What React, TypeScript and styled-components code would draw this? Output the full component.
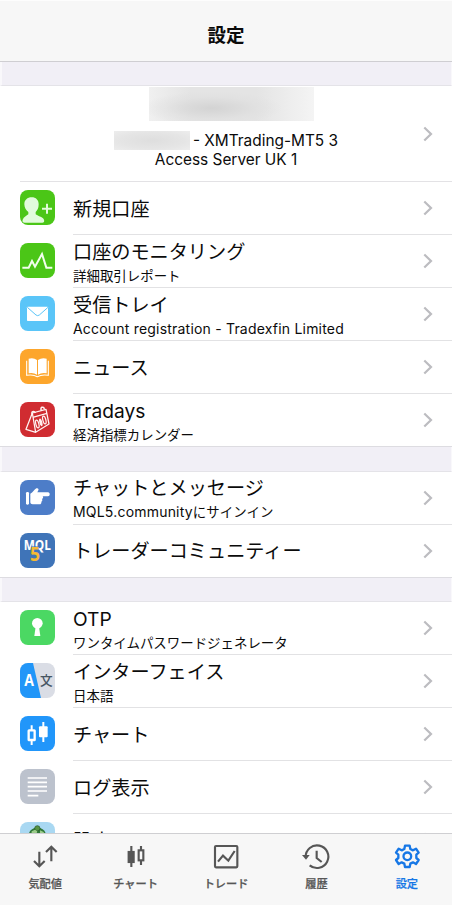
import React from "react";
import styled, { createGlobalStyle } from "styled-components";

const Global = createGlobalStyle`
  * { box-sizing: border-box; }
  html, body { margin: 0; padding: 0; background: #fff; }
  body { font-family: Inter, "Noto Sans CJK JP", sans-serif; color: #0b0b0b; overflow: hidden; }
`;

const Screen = styled.div`
  width: 452px;
  height: 905px;
  display: flex;
  flex-direction: column;
  overflow: hidden;
  background: #fff;
`;
const Header = styled.header`
  flex: none;
  height: 62px;
  padding-top: 8px;
  display: flex;
  align-items: center;
  justify-content: center;
  background: #f7f7f7;
  border-top: 1px solid #fdfdfd;
  border-bottom: 1px solid #cfced2;
`;
const HeaderTitle = styled.h1`
  margin: 0;
  font-size: 18.5px;
  line-height: 26px;
  font-weight: 700;
`;
const Content = styled.main`
  flex: 1;
  min-height: 0;
  overflow: hidden;
`;
const Gap = styled.div<{ $h: number }>`
  height: ${(p) => p.$h}px;
  background: #f1eff6;
  border-left: 2px solid #f9f8fb;
  border-right: 1px solid #f9f8fb;
  border-bottom: 1px solid #e4e3e8;
`;
const Account = styled.section`
  height: 96px;
  display: flex;
  align-items: center;
  padding-right: 19px;
  background: linear-gradient(#e3e2e5, #e3e2e5) 20px 100% / 432px 1px no-repeat;
`;
const AccountInfo = styled.div`
  flex: 1;
  height: 96px;
  padding: 1px 0 0 29px;
  display: flex;
  flex-direction: column;
  align-items: center;
`;
const NameMask = styled.div`
  width: 165px;
  height: 34px;
  margin: 0 0 10px 10px;
  background:
    radial-gradient(ellipse 70px 17px at 38% 62%, #d3d3d3, rgba(222, 222, 222, 0.5) 65%, transparent),
    linear-gradient(90deg, #f0f0f0, #e4e4e4 25%, #e4e4e4 65%, #f4f4f4);
`;
const ServerLine = styled.div`
  display: flex;
  align-items: center;
  height: 19px;
  font-size: 15.4px;
  line-height: 19px;
  white-space: pre;
`;
const NumberMask = styled.span`
  width: 76px;
  height: 19px;
  margin-right: 3px;
  background: radial-gradient(ellipse at center, #dedede, #e5e5e5 60%, #ededed);
`;
const Row = styled.div`
  height: 53px;
  display: flex;
  padding-left: 19.5px;
`;
const RowIcon = styled.svg`
  flex: none;
  width: 35px;
  height: 35px;
  margin: 8px 18.5px 0 0;
  border-radius: 8px;
`;
const RowBody = styled.div`
  flex: 1;
  display: flex;
  align-items: center;
  padding-right: 19px;
  border-bottom: 1px solid #e2e2e4;
`;
const SectionRow = styled(Row)`
  background: linear-gradient(#dddce1, #dddce1) 0 100% / 100% 1px no-repeat;
  ${RowBody} { border-bottom-color: transparent; }
`;
const Texts = styled.div`
  flex: 1;
  display: flex;
  flex-direction: column;
  padding-top: 1.5px;
`;
const Title = styled.div`
  font-size: 19.15px;
  line-height: 24px;
  white-space: nowrap;
`;
const Sub = styled.div`
  margin-top: 1px;
  font-size: 13.45px;
  line-height: 22px;
  white-space: nowrap;
`;
const Latin = styled.span`
  font-size: 14px;
  letter-spacing: 0.2px;
`;
const TwoLine = styled(Texts)`
  padding-top: 4px;
`;
const ChevronSvg = styled.svg`
  flex: none;
  width: 10px;
  height: 16px;
`;
const TabBar = styled.nav`
  flex: none;
  height: 72px;
  display: flex;
  background: #f7f7f7;
  border-top: 1px solid #cfcfd2;
`;
const Tab = styled.div<{ $active?: boolean }>`
  flex: 1;
  display: flex;
  flex-direction: column;
  align-items: center;
  padding-top: 8px;
  color: ${(p) => (p.$active ? "#1677e6" : "#565656")};
`;
const TabIcon = styled.svg`
  width: 30px;
  height: 30px;
  fill: none;
  stroke: currentColor;
  stroke-width: 6.4;
`;
const TabLabel = styled.span`
  margin-top: 4px;
  font-size: 11.2px;
  line-height: 16px;
  font-weight: 500;
  -webkit-text-stroke: 0.25px currentColor;
`;

const Chevron = () => (
  <ChevronSvg viewBox="0 0 10 16">
    <path d="M1.3 1.5 8 8l-6.7 6.5" fill="none" stroke="#bcbcc0" strokeWidth="2.2" />
  </ChevronSvg>
);

const icons: Record<string, React.ReactNode> = {
  account: (
    <>
      <rect width="105" height="105" fill="#4bc617" />
      <path d="M35 22c13 0 21 8 21 21 0 12-4 18-9 23v7c5 5 21 7 25 16 2 5-1 9-5 9H14c-5 0-8-4-6-9 3-9 12-11 17-16v-7c-7-5-12-13-12-23 0-13 9-21 22-21z" fill="#e2fbdc" />
      <path d="M66 56h30M81 41v30" stroke="#e2fbdc" strokeWidth="6" />
    </>
  ),
  monitor: (
    <>
      <rect width="105" height="105" fill="#4bc617" />
      <path d="M7 74h19l10-20 9 17 21-38 13 41h18" fill="none" stroke="#f1ffed" strokeWidth="6" />
    </>
  ),
  mail: (
    <>
      <rect width="105" height="105" fill="#5ac5f8" />
      <rect x="21" y="32" width="63" height="43" rx="2" fill="#fff" />
      <path d="m22 34 26 23q5 4 10 0l26-23" fill="none" stroke="#5ac5f8" strokeWidth="3" />
    </>
  ),
  news: (
    <>
      <rect width="105" height="105" fill="#fda62c" />
      <path d="M26 29q15-4 25 4v44q-11-7-25-4zM80 29q-15-4-26 4v44q11-7 26-4z" fill="#fff" />
      <path d="M20 35v44q20-3 32 4 13-7 33-4V35" fill="none" stroke="#fff" strokeWidth="3.2" />
    </>
  ),
  calendar: (
    <>
      <rect width="105" height="105" fill="#d02c31" />
      <g fill="none" stroke="#fff3f2" strokeWidth="3.8" strokeLinejoin="round">
        <path d="m37 33 41-11 9 44-40 25-29-9zM37 33l10 58M38 46l43-12" />
        <path d="M37 37c-5-7 5-12 9-4M64 25c-5-9 7-14 9-4" strokeWidth="4.5" />
        <ellipse cx="52" cy="66" rx="4.5" ry="12" transform="rotate(-14 52 66)" />
        <ellipse cx="73" cy="54" rx="4.5" ry="12" transform="rotate(-14 73 54)" />
        <ellipse cx="62.5" cy="61" rx="2.5" ry="10" fill="#fff3f2" transform="rotate(-14 62 61)" />
      </g>
    </>
  ),
  chat: (
    <>
      <rect width="105" height="105" fill="#4d7dc8" />
      <rect x="18" y="36" width="9" height="38" rx="4" fill="#fff" />
      <path d="M31 41c8-3 11-12 18-16 5-2 8 2 6 6l-3 6h32c7 0 7 12 0 12H68c3 3 1 7-2 8 2 3 1 7-2 8 1 4-1 8-6 8H38c-4 0-7-2-7-6z" fill="#fff" />
    </>
  ),
  mql: (
    <>
      <rect width="105" height="105" fill="#3f74b8" />
      <text x="11" y="52" fontFamily="Open Sans" fontWeight="700" fontSize="45" textLength="82" lengthAdjust="spacingAndGlyphs" fill="#fff">MQL</text>
      <text x="30" y="84" fontFamily="Open Sans" fontWeight="700" fontSize="61" textLength="30" lengthAdjust="spacingAndGlyphs" fill="#f5b933" stroke="#3f74b8" strokeWidth="3" paintOrder="stroke">5</text>
    </>
  ),
  otp: (
    <>
      <rect width="105" height="105" fill="#4bd863" />
      <circle cx="52" cy="40" r="16" fill="#fff" />
      <path d="M47 50h10l4 28H43z" fill="#fff" />
    </>
  ),
  language: (
    <>
      <rect width="105" height="105" fill="#dadde5" />
      <path d="M0 0h39l24 105H0z" fill="#2196f8" />
      <text x="13" y="70" fontFamily="Open Sans" fontWeight="700" fontSize="48" textLength="29" lengthAdjust="spacingAndGlyphs" fill="#fff">A</text>
      <text x="60" y="67" fontFamily="Noto Sans CJK JP" fontWeight="500" fontSize="38" fill="#475563">文</text>
    </>
  ),
  chart: (
    <>
      <rect width="105" height="105" fill="#2196fa" />
      <path d="M35 28v14M35 73v14M70 18v60" stroke="#fff" strokeWidth="6" />
      <rect x="26" y="43" width="18" height="29" rx="1" fill="none" stroke="#fff" strokeWidth="7" />
      <rect x="57" y="31" width="26" height="33" rx="3" fill="#fff" />
    </>
  ),
  log: (
    <>
      <rect width="105" height="105" fill="#bcc2cd" />
      <path d="M23 27h58M23 40h58M23 53h58M23 66h58M23 80h32" stroke="#fff" strokeWidth="5" />
    </>
  ),
  settings: (
    <>
      <rect width="105" height="105" fill="#a9d8f2" />
      <path d="M26 42c0-16 10-25 26-25s26 9 26 25z" fill="#2f7737" />
      <circle cx="52" cy="19" r="8" fill="#579344" stroke="#225529" strokeWidth="2" />
      <path d="m35 28 10-5 7 5-4 10-14 1zM60 25l11 5 3 10-14-2z" fill="#9bcc8a" />
    </>
  ),
};

type Item = { icon: string; title: string; latin?: string; sub?: string };

const sections: Item[][] = [
  [
    { icon: "account", title: "新規口座" },
    { icon: "monitor", title: "口座のモニタリング", sub: "詳細取引レポート" },
    { icon: "mail", title: "受信トレイ", latin: "Account registration - Tradexfin Limited" },
    { icon: "news", title: "ニュース" },
    { icon: "calendar", title: "Tradays", sub: "経済指標カレンダー" },
  ],
  [
    { icon: "chat", title: "チャットとメッセージ", latin: "MQL5.community", sub: "にサインイン" },
    { icon: "mql", title: "トレーダーコミュニティー" },
  ],
  [
    { icon: "otp", title: "OTP", sub: "ワンタイムパスワードジェネレータ" },
    { icon: "language", title: "インターフェイス", sub: "日本語" },
    { icon: "chart", title: "チャート" },
    { icon: "log", title: "ログ表示" },
    { icon: "settings", title: "設定" },
  ],
];

const ListRow = ({ item, last }: { item: Item; last: boolean }) => {
  const Wrapper = last ? SectionRow : Row;
  const hasSub = Boolean(item.sub || item.latin);
  const Block = hasSub ? TwoLine : Texts;
  return (
    <Wrapper>
      <RowIcon viewBox="0 0 105 105">{icons[item.icon]}</RowIcon>
      <RowBody>
        <Block>
          <Title>{item.title}</Title>
          {hasSub && (
            <Sub>
              {item.latin && <Latin>{item.latin}</Latin>}
              {item.sub}
            </Sub>
          )}
        </Block>
        <Chevron />
      </RowBody>
    </Wrapper>
  );
};

const tabs: { label: string; icon: React.ReactNode; active?: boolean }[] = [
  { label: "気配値", icon: <path d="M28 29v43M12 57l16 16 16-16M64 58V15M48 30l16-16 16 16" /> },
  {
    label: "チャート",
    icon: (
      <>
        <path d="M31 12v63M60 12v12M60 57v12" />
        <rect x="23" y="30" width="15" height="30" fill="currentColor" />
        <rect x="53" y="25" width="14" height="30" />
      </>
    ),
  },
  {
    label: "トレード",
    icon: (
      <>
        <rect x="12" y="12" width="67" height="64" rx="3" />
        <path d="m21 59 15-18 16 15 19-29" />
      </>
    ),
  },
  {
    label: "履歴",
    icon: (
      <>
        <path d="M14 45a34 34 0 1 1 12 25" />
        <path d="M47 26v22l15 12" />
        <path d="M3 39h23L15 53z" fill="currentColor" stroke="none" />
      </>
    ),
  },
  {
    label: "設定",
    active: true,
    icon: (
      <>
        <path
          d="M39 11h14l2 10 8 4 9-5 8 12-7 6v10l7 6-8 12-9-5-8 4-2 10H39l-2-10-8-4-9 5-8-12 7-6V38l-7-6 8-12 9 5 8-4z"
          strokeWidth="7"
          strokeLinejoin="round"
        />
        <circle cx="46" cy="43" r="11.5" strokeWidth="7" />
      </>
    ),
  },
];

export default function App() {
  return (
    <>
      <Global />
      <Screen>
        <Header>
          <HeaderTitle>設定</HeaderTitle>
        </Header>
        <Content>
          <Gap $h={24} />
          <Account>
            <AccountInfo>
              <NameMask />
              <ServerLine>
                <NumberMask />- XMTrading-MT5 3
              </ServerLine>
              <ServerLine>Access Server UK 1</ServerLine>
            </AccountInfo>
            <Chevron />
          </Account>
          {sections.map((items, s) => (
            <React.Fragment key={s}>
              {s > 0 && <Gap $h={24.5} />}
              {items.map((item, i) => (
                <ListRow key={item.icon} item={item} last={s < 2 && i === items.length - 1} />
              ))}
            </React.Fragment>
          ))}
        </Content>
        <TabBar>
          {tabs.map((tab) => (
            <Tab key={tab.label} $active={tab.active}>
              <TabIcon viewBox="0 0 90 90">{tab.icon}</TabIcon>
              <TabLabel>{tab.label}</TabLabel>
            </Tab>
          ))}
        </TabBar>
      </Screen>
    </>
  );
}
